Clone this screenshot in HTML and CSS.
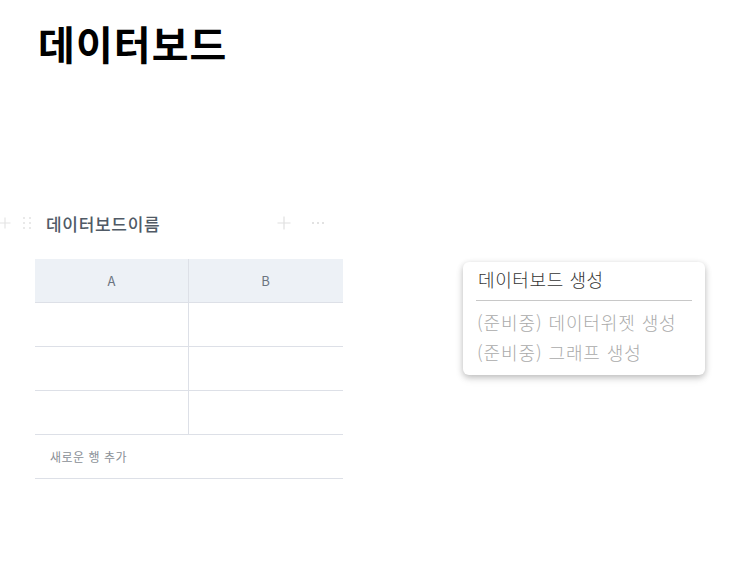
FILE: index.html
```html
<!DOCTYPE html>
<html lang="ko">
<head>
<meta charset="utf-8">
<link rel="stylesheet" href="styles.css">
</head>
<body>
<div class="page">
  <h1 class="title">데이터보드</h1>
  <section class="board">
    <div class="board-head">
      <span class="add-left">
        <svg width="12" height="12" viewBox="0 0 12 12"><path d="M6 0.5V11.5M0.5 6H11.5" stroke="#e4e4e4" stroke-width="1.2"/></svg>
      </span>
      <span class="grip">
        <svg width="10" height="14" viewBox="0 0 10 14"><g fill="#e2e2e2"><circle cx="2" cy="2" r="1"/><circle cx="8" cy="2" r="1"/><circle cx="2" cy="7" r="1"/><circle cx="8" cy="7" r="1"/><circle cx="2" cy="12" r="1"/><circle cx="8" cy="12" r="1"/></g></svg>
      </span>
      <span class="board-name">데이터보드이름</span>
      <span class="head-actions">
        <svg width="14" height="14" viewBox="0 0 14 14"><path d="M7 0.5V13.5M0.5 7H13.5" stroke="#e0e0e0" stroke-width="1.2"/></svg>
        <svg width="14" height="4" viewBox="0 0 14 4"><g fill="#d8d8d8"><circle cx="2" cy="2" r="1"/><circle cx="7" cy="2" r="1"/><circle cx="12" cy="2" r="1"/></g></svg>
      </span>
    </div>
    <div class="table">
      <div class="row head"><div class="cell">A</div><div class="cell">B</div></div>
      <div class="row"><div class="cell"></div><div class="cell"></div></div>
      <div class="row"><div class="cell"></div><div class="cell"></div></div>
      <div class="row"><div class="cell"></div><div class="cell"></div></div>
      <div class="add-row">새로운 행 추가</div>
    </div>
  </section>
  <div class="menu">
    <div class="menu-title">데이터보드 생성</div>
    <div class="menu-sep"></div>
    <div class="menu-item">(준비중) 데이터위젯 생성</div>
    <div class="menu-item">(준비중) 그래프 생성</div>
  </div>
</div>
</body>
</html>
```
FILE: styles.css
```css
html, body {
  margin: 0;
  padding: 0;
  background: #fff;
  font-family: "Noto Sans CJK KR", "Noto Sans", sans-serif;
}
.page {
  position: relative;
  width: 754px;
  height: 578px;
}
.title {
  margin: 0;
  padding: 14px 0 0 38px;
  font-size: 40px;
  font-weight: 700;
  line-height: 58px;
  color: #000;
  letter-spacing: 1.1px;
}
.board {
  margin-top: 138px;
  width: 343px;
}
.board-head {
  display: flex;
  align-items: center;
  height: 26px;
}
.add-left {
  display: flex;
  width: 22px;
  margin-left: -1px;
}
.grip {
  display: flex;
  width: 24px;
  padding-left: 1px;
}
.board-name {
  font-size: 17px;
  font-weight: 500;
  color: #505a66;
  letter-spacing: 0.7px;
}
.head-actions {
  margin-left: auto;
  display: flex;
  align-items: center;
  gap: 20px;
  margin-right: 18px;
}
.table {
  margin-top: 23px;
  margin-left: 35px;
  width: 308px;
}
.row {
  display: flex;
  height: 43px;
  border-bottom: 1px solid #dde0e7;
}
.row.head {
  background: #edf1f6;
}
.cell {
  flex: 0 0 153px;
  display: flex;
  align-items: center;
  justify-content: center;
  font-size: 13px;
  color: #6b7480;
}
.cell:first-child {
  border-right: 1px solid #dde0e7;
}
.add-row {
  height: 43px;
  border-bottom: 1px solid #dde0e7;
  display: flex;
  align-items: center;
  padding-left: 15px;
  font-size: 12px;
  color: #8a8f96;
  letter-spacing: 0.5px;
}
.menu {
  position: absolute;
  left: 463px;
  top: 262px;
  width: 242px;
  height: 113px;
  box-sizing: border-box;
  background: #fff;
  border-radius: 6px;
  box-shadow: 0 2px 6px rgba(0,0,0,0.22), 0 4px 10px rgba(0,0,0,0.08);
  padding: 4px 13px 0 13px;
}
.menu-title {
  font-size: 18px;
  color: #333;
  line-height: 26px;
  padding-left: 2px;
  letter-spacing: 0.6px;
  font-weight: 300;
}
.menu-sep {
  margin-top: 8px;
  height: 1px;
  background: #c8c8c8;
}
.menu-item {
  font-size: 18px;
  color: #aaa;
  line-height: 30px;
  padding-left: 1px;
  letter-spacing: 0.9px;
  font-weight: 300;
}
.menu-sep + .menu-item {
  margin-top: 6px;
}
```
